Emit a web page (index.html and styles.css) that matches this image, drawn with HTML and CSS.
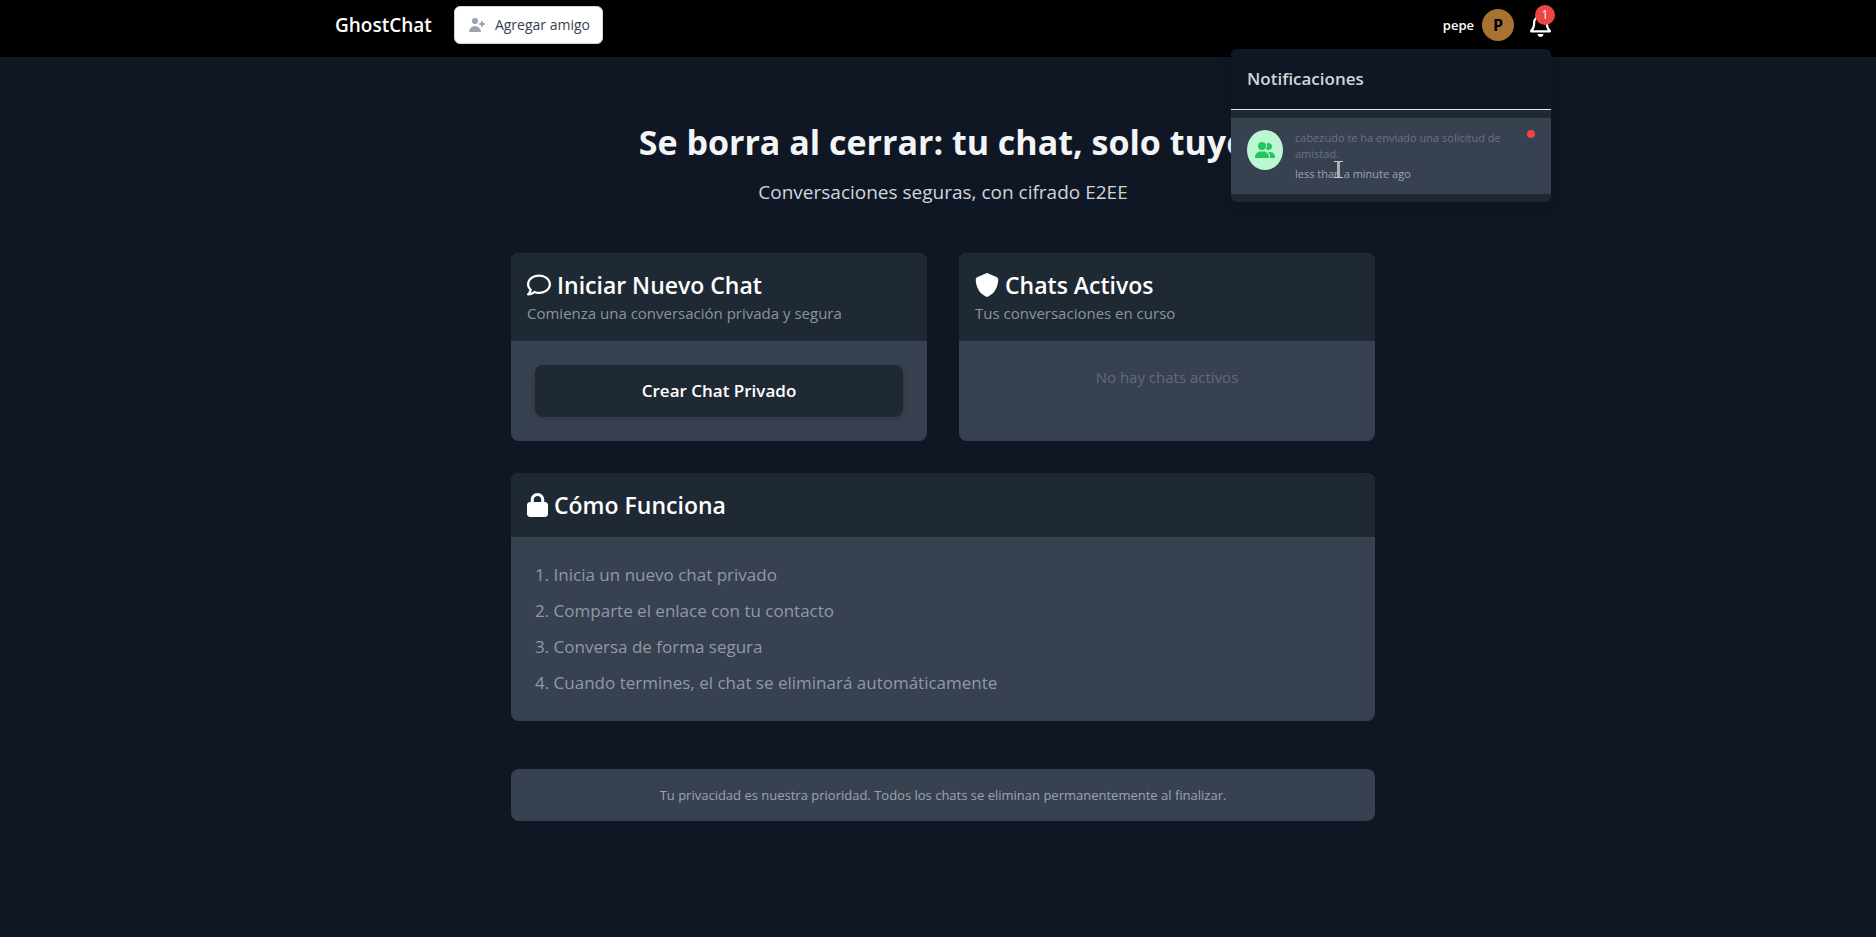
FILE: index.html
```html
<!DOCTYPE html>
<html lang="es">
<head>
  <meta charset="UTF-8">
  <meta name="viewport" content="width=device-width, initial-scale=1.0">
  <title>GhostChat</title>
  <link rel="stylesheet" href="styles.css">
</head>
<body>
  <nav class="navbar">
    <div class="navbar-inner">
      <div class="navbar-left">
        <a class="brand" href="#">GhostChat</a>
        <button class="add-friend" type="button">
          <svg width="20" height="20" viewBox="0 0 20 20" fill="currentColor" aria-hidden="true"><path d="M8 9a3 3 0 100-6 3 3 0 000 6zM8 11a6 6 0 016 6H2a6 6 0 016-6zM16 7a1 1 0 10-2 0v1h-1a1 1 0 100 2h1v1a1 1 0 102 0v-1h1a1 1 0 100-2h-1V7z"/></svg>
          Agregar amigo
        </button>
      </div>
      <div class="navbar-right">
        <span class="username">pepe</span>
        <span class="avatar">P</span>
        <div class="notifications">
          <button class="bell" id="bell" type="button" aria-label="Notificaciones" aria-expanded="true">
            <svg width="21" height="24" viewBox="0 0 448 512" fill="currentColor" aria-hidden="true"><path d="M439.39 362.29c-19.32-20.76-55.47-51.99-55.47-154.29 0-77.7-54.48-139.9-127.94-155.16V32c0-17.67-14.32-32-31.98-32s-31.98 14.33-31.98 32v20.84C118.56 68.1 64.08 130.3 64.08 208c0 102.3-36.15 133.53-55.47 154.29-6 6.45-8.66 14.16-8.61 21.71.11 16.4 12.98 32 32.1 32h383.8c19.12 0 32-15.6 32.1-32 .05-7.55-2.61-15.27-8.61-21.71zM67.53 368c21.22-27.97 44.42-74.33 44.53-159.42 0-.2-.06-.38-.06-.58 0-61.86 50.14-112 112-112s112 50.14 112 112c0 .2-.06.38-.06.58.11 85.1 23.31 131.46 44.53 159.42H67.53zM224 512c35.32 0 63.97-28.65 63.97-64H160.03c0 35.35 28.65 64 63.97 64z"/></svg>
            <span class="badge">1</span>
          </button>
          <div class="dropdown" id="dropdown">
            <h3>Notificaciones</h3>
            <ul>
              <li class="notification">
                <span class="notification-icon">
                  <svg width="20" height="16" viewBox="0 0 640 512" fill="currentColor" aria-hidden="true"><path d="M96 128a128 128 0 1 1 256 0A128 128 0 1 1 96 128zM0 482.3C0 383.8 79.8 304 178.3 304h91.4C368.2 304 448 383.8 448 482.3c0 16.4-13.3 29.7-29.7 29.7H29.7C13.3 512 0 498.7 0 482.3zM609.3 512H471.4c5.4-9.4 8.6-20.3 8.6-32v-8c0-60.7-27.1-115.2-69.8-151.8c2.4-.1 4.7-.2 7.1-.2h61.4C567.8 320 640 392.2 640 481.3c0 17-13.8 30.7-30.7 30.7zM432 256c-31 0-59-12.6-79.3-32.9C372.4 196.5 384 163.6 384 128c0-26.8-6.6-52.1-18.3-74.3C384.3 40.1 407.2 32 432 32c61.9 0 112 50.1 112 112s-50.1 112-112 112z"/></svg>
                </span>
                <div class="notification-text">
                  <p>cabezudo te ha enviado una solicitud de amistad.</p>
                  <p class="time">less than a minute ago</p>
                </div>
                <span class="unread"></span>
                <svg class="cursor" width="9" height="17" viewBox="0 0 9 17" fill="none" stroke="#c3c7cd" aria-hidden="true"><path d="M0 .5h9M0 16.5h9"/><path d="M4.5 1v15" stroke-width="3" stroke="#a9adb3"/></svg>
              </li>
            </ul>
          </div>
        </div>
      </div>
    </div>
  </nav>

  <main class="page">
    <div class="content">
      <header class="hero">
        <h1>Se borra al cerrar: tu chat, solo tuyo</h1>
        <p>Conversaciones seguras, con cifrado E2EE</p>
      </header>

      <div class="cards">
        <section class="card">
          <div class="card-header">
            <h2>
              <svg width="24" height="24" viewBox="0 0 512 512" fill="currentColor" aria-hidden="true"><path d="M256 32C114.6 32 0 125.1 0 240c0 47.6 19.9 91.2 52.9 126.3C38 405.7 7 439.1 6.5 439.5c-6.6 7-8.4 17.2-4.6 26S14.4 480 24 480c61.5 0 110-25.7 139.1-46.3C192 442.8 223.2 448 256 448c141.4 0 256-93.1 256-208S397.4 32 256 32zm0 368c-26.7 0-53.1-4.1-78.4-12.1l-22.7-7.2-19.5 13.8c-14.3 10.1-33.9 21.4-57.5 29 7.3-12.1 14.4-25.7 19.9-40.2l10.6-28.1-20.6-21.8C69.7 314.1 48 282.2 48 240c0-88.2 93.3-160 208-160s208 71.8 208 160-93.3 160-208 160z"/></svg>
              Iniciar Nuevo Chat
            </h2>
            <p>Comienza una conversación privada y segura</p>
          </div>
          <div class="card-body">
            <button class="create-chat" type="button">Crear Chat Privado</button>
          </div>
        </section>

        <section class="card">
          <div class="card-header">
            <h2>
              <svg width="24" height="24" viewBox="0 0 512 512" fill="currentColor" aria-hidden="true"><path d="M256 0c4.6 0 9.2 1 13.4 2.9L457.7 82.8c22 9.3 38.4 31 38.3 57.2c-.5 99.2-41.3 280.7-213.6 363.2c-16.7 8-36.1 8-52.8 0C57.3 420.7 16.5 239.2 16 140c-.1-26.2 16.3-47.9 38.3-57.2L242.7 2.9C246.8 1 251.4 0 256 0z"/></svg>
              Chats Activos
            </h2>
            <p>Tus conversaciones en curso</p>
          </div>
          <div class="card-body">
            <p class="empty">No hay chats activos</p>
          </div>
        </section>
      </div>

      <section class="card">
        <div class="card-header">
          <h2>
            <svg width="21" height="24" viewBox="0 0 448 512" fill="currentColor" aria-hidden="true"><path d="M144 144l0 48 160 0 0-48c0-44.2-35.8-80-80-80s-80 35.8-80 80zM80 192l0-48C80 64.5 144.5 0 224 0s144 64.5 144 144l0 48 16 0c35.3 0 64 28.7 64 64l0 192c0 35.3-28.7 64-64 64L64 512c-35.3 0-64-28.7-64-64L0 256c0-35.3 28.7-64 64-64l16 0z"/></svg>
            Cómo Funciona
          </h2>
        </div>
        <div class="card-body">
          <ol class="steps">
            <li>Inicia un nuevo chat privado</li>
            <li>Comparte el enlace con tu contacto</li>
            <li>Conversa de forma segura</li>
            <li>Cuando termines, el chat se eliminará automáticamente</li>
          </ol>
        </div>
      </section>

      <footer class="privacy">Tu privacidad es nuestra prioridad. Todos los chats se eliminan permanentemente al finalizar.</footer>
    </div>
  </main>

  <script>
    const bell = document.getElementById('bell');
    const dropdown = document.getElementById('dropdown');

    bell.addEventListener('click', function() {
      dropdown.hidden = !dropdown.hidden;
      bell.setAttribute('aria-expanded', String(!dropdown.hidden));
    });
  </script>
</body>
</html>
```
FILE: styles.css
```css
* {
  box-sizing: border-box;
}
body {
  margin: 0;
  min-height: 100vh;
  background: #101724;
  color: #fff;
  font-family: "Segoe UI", "Open Sans", "Noto Sans", sans-serif;
  font-size: 15px;
  line-height: 24px;
}
h1, h2, h3, p, ul, ol {
  margin: 0;
  padding: 0;
}
ul, ol {
  list-style-position: inside;
}
button {
  font-family: inherit;
  cursor: pointer;
}
svg {
  display: block;
  flex-shrink: 0;
}

/* Navbar */
.navbar {
  background: #000;
  padding: 0 0 7px 10px;
}
.navbar-inner {
  display: flex;
  align-items: center;
  justify-content: space-between;
  max-width: 1280px;
  height: 50px;
  margin: 0 auto;
  padding: 0 32px;
}
.navbar-left {
  display: flex;
  align-items: center;
  gap: 22px;
}
.brand {
  color: #fff;
  font-size: 19px;
  font-weight: 600;
  line-height: 28px;
  text-decoration: none;
}
.add-friend {
  display: flex;
  align-items: center;
  gap: 8px;
  padding: 8px 12px;
  background: #fff;
  border: 1px solid #d1d5db;
  border-radius: 6px;
  color: #374151;
  font-size: 14px;
  font-weight: 500;
  line-height: 20px;
}
.add-friend svg {
  color: #9ca3af;
}
.navbar-right {
  display: flex;
  align-items: center;
}
.username {
  margin-right: 8px;
  font-size: 13px;
  font-weight: 600;
}
.avatar {
  display: flex;
  align-items: center;
  justify-content: center;
  width: 32px;
  height: 32px;
  margin-right: 16px;
  border-radius: 50%;
  background: #a87233;
  color: #000;
  font-size: 16px;
  font-weight: 700;
}
.notifications {
  position: relative;
}
.bell {
  position: relative;
  display: block;
  padding: 4px 0;
  background: none;
  border: none;
  color: #fff;
}
.badge {
  position: absolute;
  top: -4px;
  right: -4px;
  width: 20px;
  height: 20px;
  border-radius: 50%;
  background: #ef4444;
  font-size: 12px;
  line-height: 20px;
  text-align: center;
}

/* Notifications menu */
.dropdown {
  position: absolute;
  top: calc(100% + 8px);
  right: 0;
  z-index: 10;
  width: 320px;
  overflow: hidden;
  background: #1f2934;
  border-radius: 6px;
  box-shadow: 0 4px 12px rgba(0, 0, 0, 0.15);
}
.dropdown h3 {
  padding: 16px;
  background: #101724;
  border-bottom: 1px solid #e5e7eb;
  color: #d1d5db;
  font-size: 17px;
  font-weight: 600;
  line-height: 28px;
}
.dropdown ul {
  padding: 8px 0;
  list-style: none;
}
.notification {
  position: relative;
  display: flex;
  align-items: flex-start;
  padding: 12px 16px;
  background: #384150;
}
.notification-icon {
  display: flex;
  align-items: center;
  justify-content: center;
  flex-shrink: 0;
  width: 36px;
  height: 40px;
  margin-right: 12px;
  border-radius: 50%;
  background: #bbf7d0;
  color: #22c55e;
}
.notification-text {
  flex: 1;
  color: #6b7280;
  font-size: 11px;
  line-height: 16px;
}
.notification-text .time {
  margin-top: 4px;
  color: #9ca3af;
}
.unread {
  width: 8px;
  height: 8px;
  margin-left: 8px;
  border-radius: 50%;
  background: #ef4444;
}
.cursor {
  position: absolute;
  left: 103px;
  top: 43px;
}

/* Content */
.page {
  padding: 65px 0 64px 10px;
}
.content {
  max-width: 896px;
  margin: 0 auto;
  padding: 0 16px;
}
.hero {
  margin-bottom: 47px;
  text-align: center;
}
.hero h1 {
  margin-bottom: 16px;
  color: #f3f4f6;
  font-size: 34px;
  font-weight: 700;
  line-height: 40px;
}
.hero p {
  color: #d1d5db;
  font-size: 19px;
  line-height: 28px;
}
.cards {
  display: grid;
  grid-template-columns: 1fr 1fr;
  gap: 32px;
  margin-bottom: 32px;
}
.card {
  overflow: hidden;
  background: #384150;
  border-radius: 8px;
}
.card-header {
  padding: 16px;
  background: #1f2934;
}
.card-header h2 {
  display: flex;
  align-items: center;
  gap: 6px;
  font-size: 23px;
  font-weight: 600;
  line-height: 32px;
}
.card-header p {
  color: #8b949f;
}
.card-body {
  padding: 24px;
}
.create-chat {
  display: block;
  width: 100%;
  padding: 12px 16px;
  background: #1f2934;
  border: none;
  border-radius: 8px;
  box-shadow: 0 2px 6px rgba(0, 0, 0, 0.15);
  color: #fff;
  font-size: 17px;
  font-weight: 600;
  line-height: 28px;
}
.empty {
  color: #626a79;
  text-align: center;
}
.steps {
  display: flex;
  flex-direction: column;
  gap: 8px;
  color: #9099a5;
  font-size: 17px;
  line-height: 28px;
}
.privacy {
  margin-top: 48px;
  padding: 16px;
  background: #384150;
  border-radius: 8px;
  color: #9ca3af;
  font-size: 13px;
  line-height: 20px;
  text-align: center;
}
@media (max-width: 768px) {
  .cards {
    grid-template-columns: 1fr;
  }
}
```
